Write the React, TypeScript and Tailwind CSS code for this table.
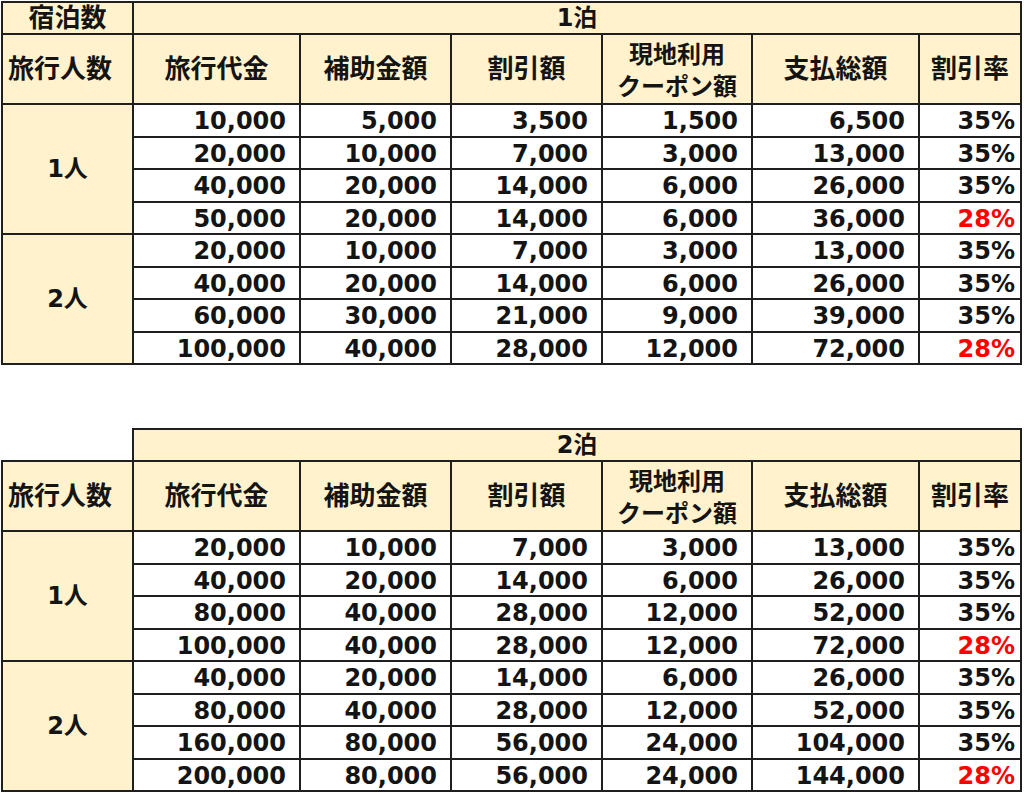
import React from "react";

type Row = [string, string, string, string, string, string];

const night1: { people: string; rows: Row[] }[] = [
  {
    people: "1人",
    rows: [
      ["10,000", "5,000", "3,500", "1,500", "6,500", "35%"],
      ["20,000", "10,000", "7,000", "3,000", "13,000", "35%"],
      ["40,000", "20,000", "14,000", "6,000", "26,000", "35%"],
      ["50,000", "20,000", "14,000", "6,000", "36,000", "28%"],
    ],
  },
  {
    people: "2人",
    rows: [
      ["20,000", "10,000", "7,000", "3,000", "13,000", "35%"],
      ["40,000", "20,000", "14,000", "6,000", "26,000", "35%"],
      ["60,000", "30,000", "21,000", "9,000", "39,000", "35%"],
      ["100,000", "40,000", "28,000", "12,000", "72,000", "28%"],
    ],
  },
];

const night2: { people: string; rows: Row[] }[] = [
  {
    people: "1人",
    rows: [
      ["20,000", "10,000", "7,000", "3,000", "13,000", "35%"],
      ["40,000", "20,000", "14,000", "6,000", "26,000", "35%"],
      ["80,000", "40,000", "28,000", "12,000", "52,000", "35%"],
      ["100,000", "40,000", "28,000", "12,000", "72,000", "28%"],
    ],
  },
  {
    people: "2人",
    rows: [
      ["40,000", "20,000", "14,000", "6,000", "26,000", "35%"],
      ["80,000", "40,000", "28,000", "12,000", "52,000", "35%"],
      ["160,000", "80,000", "56,000", "24,000", "104,000", "35%"],
      ["200,000", "80,000", "56,000", "24,000", "144,000", "28%"],
    ],
  },
];

const cell = "border-2 border-[#1f1f1f]";
const fill = `${cell} bg-[#fff2cc] text-center align-middle`;

function Cols() {
  return (
    <colgroup>
      <col className="w-[131px]" />
      <col className="w-[167px]" />
      <col className="w-[151px]" />
      <col className="w-[151px]" />
      <col className="w-[150px]" />
      <col className="w-[167px]" />
      <col className="w-[102px]" />
    </colgroup>
  );
}

function Head({ children, className }: { children: React.ReactNode; className?: string }) {
  return (
    <td className={`${fill} ${className ?? ""}`}>
      <div className="text-[26px] leading-none">{children}</div>
    </td>
  );
}

function PriceTable({
  nights,
  groups,
  showLabel,
  className,
}: {
  nights: string;
  groups: { people: string; rows: Row[] }[];
  showLabel: boolean;
  className?: string;
}) {
  return (
    <table className={`ml-px w-[1021px] table-fixed border-collapse ${className ?? ""}`}>
      <Cols />
      <tbody>
        <tr className="h-[32px]">
          {showLabel ? <Head>宿泊数</Head> : <td className="border-0 bg-white" />}
          <td colSpan={6} className={fill}>
            <div className="text-[24px] leading-none">{nights}</div>
          </td>
        </tr>
        <tr className="h-[70px]">
          <Head className="text-left pl-[5px]">旅行人数</Head>
          <Head>旅行代金</Head>
          <Head>補助金額</Head>
          <Head>割引額</Head>
          <td className={fill}>
            <div className="text-[24px] leading-[32px] pt-[3px]">
              現地利用
              <br />
              クーポン額
            </div>
          </td>
          <Head>支払総額</Head>
          <Head>割引率</Head>
        </tr>
        {groups.map((g) =>
          g.rows.map((r, i) => (
            <tr key={g.people + i} className="h-[32.5px]">
              {i === 0 && (
                <td rowSpan={4} className={fill}>
                  <div className="text-[24px] leading-none">{g.people}</div>
                </td>
              )}
              {r.map((v, j) => (
                <td
                  key={j}
                  className={`${cell} bg-white text-right leading-none pt-[2px] ${
                    j === 5 ? "pr-[5px]" : "pr-[13px]"
                  } ${j === 5 && v === "28%" ? "text-[#ff0000]" : ""}`}
                >
                  {v}
                </td>
              ))}
            </tr>
          ))
        )}
      </tbody>
    </table>
  );
}

export default function App() {
  return (
    <div
      className="w-[1024px] h-[793px] overflow-hidden bg-white pt-px font-bold text-[24px] text-[#141414]"
      style={{ fontFamily: '"DejaVu Sans", "Noto Sans CJK JP", sans-serif' }}
    >
      <PriceTable nights="1泊" groups={night1} showLabel />
      <PriceTable nights="2泊" groups={night2} showLabel={false} className="mt-[63px]" />
    </div>
  );
}
